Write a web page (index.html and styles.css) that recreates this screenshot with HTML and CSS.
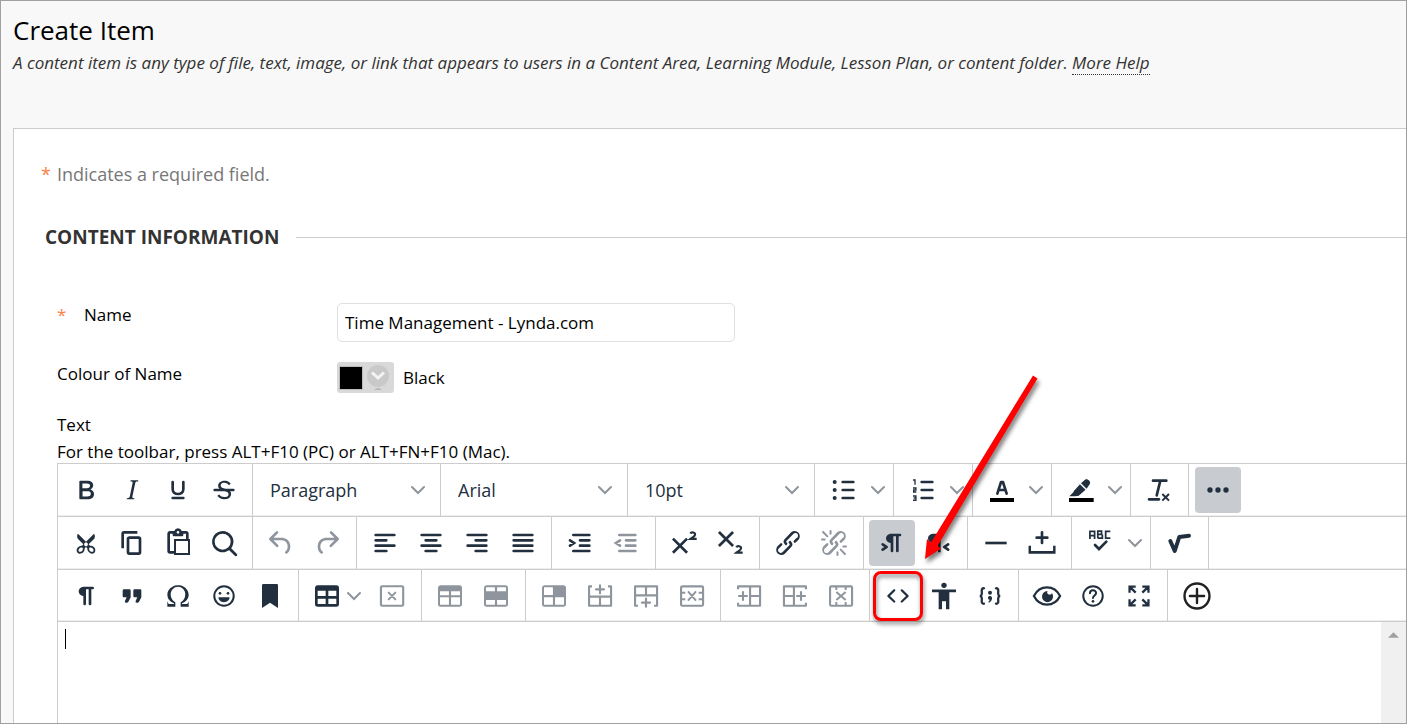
FILE: index.html
```
<!DOCTYPE html>
<html lang="en">
<head>
<meta charset="utf-8">
<title>Create Item</title>
<link rel="stylesheet" href="styles.css">
</head>
<body>
<svg class="sprite" aria-hidden="true">
  <symbol id="chev" viewBox="0 0 14 14"><path class="ln" stroke-width="2" stroke-linecap="round" d="M1 4l6 6 6-6"/></symbol>
  <symbol id="bold" viewBox="0 0 24 24"><path d="M7.8 19c-.3 0-.5 0-.6-.2l-.2-.5V5.7c0-.2 0-.4.2-.5l.6-.2h5c1.5 0 2.7.3 3.5 1 .7.6 1.1 1.4 1.1 2.5a3 3 0 0 1-.6 1.9c-.4.6-1 1-1.6 1.2.4.1.9.3 1.3.6s.8.7 1 1.2c.4.4.5 1 .5 1.6 0 1.3-.4 2.3-1.3 3-.8.7-2.1 1-3.8 1H7.8zm5-8.3c.6 0 1.2-.1 1.6-.5.4-.3.6-.7.6-1.3 0-1.1-.8-1.7-2.3-1.7H9.3v3.5h3.4zm.5 6c.7 0 1.3-.1 1.7-.4.4-.4.6-.9.6-1.5s-.2-1-.7-1.4c-.4-.3-1-.4-2-.4H9.4v3.8h4z"/></symbol>
  <symbol id="italic" viewBox="0 0 24 24"><path d="M16.7 4.7l-.1.9h-.3c-.6 0-1 0-1.4.3-.3.3-.4.6-.5 1.1l-2.1 9.8v.6c0 .5.4.8 1.4.8h.2l-.2.8H8l.2-.8h.2c1.1 0 1.8-.5 2-1.5l2-9.8.1-.5c0-.6-.4-.8-1.4-.8h-.3l.2-.9h5.8z"/></symbol>
  <symbol id="underline" viewBox="0 0 24 24"><path class="ln" stroke-width="2" stroke-linecap="round" d="M8 6v5.500c0 4.700 8 4.700 8 0V6M8 18h8"/></symbol>
  <symbol id="strike" viewBox="0 0 24 24"><path d="M15.600 8.500c-.5-.7-1-1.100-1.300-1.300-.6-.4-1.300-.6-2-.6-2.700 0-2.800 1.700-2.800 2.100 0 1.600 1.800 2 3.200 2.300 4.400.9 4.600 2.800 4.600 3.900 0 1.400-.7 4.100-5 4.100A6.200 6.200 0 0 1 7 16.400l1.500-1.100c.4.6 1.600 2 3.700 2 1.600 0 2.500-.4 3-1.200.4-.8.3-2-.8-2.600-.7-.4-1.600-.7-2.900-1-1-.2-3.900-.8-3.900-3.600C7.600 6 10.300 5 12.400 5c2.900 0 4.200 1.600 4.700 2.400l-1.500 1.100z"/><path d="M5 11h14a1 1 0 0 1 0 2H5a1 1 0 0 1 0-2z"/></symbol>
  <symbol id="bullets" viewBox="0 0 24 24"><circle cx="5" cy="6" r="1.500"/><circle cx="5" cy="12" r="1.500"/><circle cx="5" cy="18" r="1.500"/><path class="ln" stroke-width="2" stroke-linecap="round" d="M11 6h8M11 12h8M11 18h8"/></symbol>
  <symbol id="numbers" viewBox="0 0 24 24"><path class="ln" stroke-width="2" stroke-linecap="round" d="M11 6h8M11 12h8M11 18h8"/><path class="ln" stroke-width="1" d="M4.500 4.500H6V8M4.500 10.500h2.200V12H5v1.500h2M4.500 16.500h2.200v3.200H4.500M5 18h1.500"/></symbol>
  <symbol id="forecolor" viewBox="0 0 24 24"><path fill="#000" d="M3 18h18v3H3z"/><path class="ln" stroke-width="2" stroke-linejoin="round" stroke-linecap="round" d="M8.500 14.700L11.300 6h1.400l2.800 8.700M9.800 12h4.400"/></symbol>
  <symbol id="backcolor" viewBox="0 0 24 24"><path fill="#000" d="M3 18h18.500v3H3z"/><path d="M7.700 16.700H3.300l3.300-3.300-.3-.3 4.900-5.500 4.200 4.200-5.100 4.500zM12 6.900l3.200-2.700c1.400-1.100 4.700 1.400 3.300 3.400L16.200 11z"/></symbol>
  <symbol id="clear" viewBox="0 0 24 24"><path class="ln" stroke-width="2" stroke-linecap="round" d="M7.500 5h10M13 5l-2.700 11M4.500 19H12"/><path class="ln" stroke-width="1.500" d="M14.500 15l5 5M19.500 15l-5 5"/></symbol>
  <symbol id="more" viewBox="0 0 24 24"><circle cx="6" cy="12" r="2"/><circle cx="12" cy="12" r="2"/><circle cx="18" cy="12" r="2"/></symbol>
  <symbol id="cut" viewBox="0 0 24 24"><path d="M18 15c.6.7 1 1.400 1 2.300 0 .8-.2 1.500-.7 2l-.8.5-1 .2c-.4 0-.8 0-1.200-.3a3.900 3.900 0 0 1-2.100-2.200c-.2-.5-.3-1-.2-1.500l-1-1-1 1c0 .5 0 1-.2 1.500-.1.500-.4 1-.9 1.400-.3.4-.7.6-1.200.8l-1.200.3c-.4 0-.7 0-1-.2-.3 0-.6-.3-.8-.5-.5-.5-.8-1.200-.7-2 0-.9.4-1.600 1-2.200A3.700 3.700 0 0 1 8.600 14H9l1-1-4-4-.5-1a3.300 3.300 0 0 1 0-2c0-.4.3-.7.5-1l6 6 6-6 .5 1a3.300 3.300 0 0 1 0 2c0 .4-.3.7-.5 1l-4 4 1 1h.5c.4 0 .8 0 1.200.3.5.2.9.4 1.200.8zm-8.500 2.200l.1-.4v-.7a1 1 0 0 0-.2-.5 1 1 0 0 0-.4-.2 1.600 1.600 0 0 0-.8 0 2.600 2.600 0 0 0-.8.3 2.500 2.500 0 0 0-.9 1.100l-.1.4v.7l.2.5.5.2h.7a2.500 2.500 0 0 0 .8-.3 2.800 2.800 0 0 0 1-1zm2.500-2.800c.4 0 .7-.1 1-.4.3-.3.4-.6.4-1s-.1-.7-.4-1c-.3-.3-.6-.4-1-.4s-.7.1-1 .4c-.3.3-.4.6-.4 1s.1.7.4 1c.3.3.6.4 1 .4zm5.400 4l.2-.5v-.7a2.600 2.600 0 0 0-.3-.8 2.400 2.400 0 0 0-.7-.7 2.500 2.500 0 0 0-.8-.3 1.500 1.500 0 0 0-.8 0 1 1 0 0 0-.4.2 1 1 0 0 0-.2.500 1.500 1.500 0 0 0 0 .7v.4l.3.4.3.4a2.800 2.800 0 0 0 .8.5l.4.1h.7l.5-.2z"/></symbol>
  <symbol id="copy" viewBox="0 0 24 24"><path d="M16 3H6a2 2 0 0 0-2 2v11h2V5h10V3zm1 4a2 2 0 0 1 2 2v10a2 2 0 0 1-2 2h-7a2 2 0 0 1-2-2V9c0-1.200.9-2 2-2h7zm0 12V9h-7v10h7z"/></symbol>
  <symbol id="paste" viewBox="0 0 24 24"><path fill-rule="evenodd" d="M18 9V5h-2v1c0 .6-.4 1-1 1H9a1 1 0 0 1-1-1V5H6v13h3V9h9zM9 20H6a2 2 0 0 1-2-2V5c0-1.100.9-2 2-2h3.200A3 3 0 0 1 12 1a3 3 0 0 1 2.800 2H18a2 2 0 0 1 2 2v4h1v12H9v-1zm1.500-9.500v9h9v-9h-9zM12 3a1 1 0 0 0-1 1c0 .5.4 1 1 1s1-.5 1-1-.4-1-1-1z"/></symbol>
  <symbol id="search" viewBox="0 0 24 24"><path d="M16 17.300a8 8 0 1 1 1.400-1.400l4.300 4.400a1 1 0 0 1-1.400 1.400l-4.400-4.300zm-5-.3a6 6 0 1 0 0-12 6 6 0 0 0 0 12z"/></symbol>
  <symbol id="undo" viewBox="0 0 24 24"><path d="M6.400 8H12c3.700 0 6.200 2 6.800 5.100.6 2.700-.4 5.600-2.300 6.800a1 1 0 0 1-1-1.800c1.100-.6 1.800-2.700 1.400-4.600-.5-2.100-2.100-3.500-4.900-3.500H6.400l3.300 3.300a1 1 0 1 1-1.400 1.400l-5-5a1 1 0 0 1 0-1.400l5-5a1 1 0 0 1 1.400 1.400L6.400 8z"/></symbol>
  <symbol id="redo" viewBox="0 0 24 24"><path transform="matrix(-1 0 0 1 24 0)" d="M6.400 8H12c3.700 0 6.200 2 6.800 5.100.6 2.700-.4 5.600-2.300 6.800a1 1 0 0 1-1-1.800c1.100-.6 1.800-2.700 1.400-4.600-.5-2.100-2.100-3.500-4.900-3.500H6.400l3.300 3.300a1 1 0 1 1-1.400 1.400l-5-5a1 1 0 0 1 0-1.400l5-5a1 1 0 0 1 1.400 1.400L6.400 8z"/></symbol>
  <symbol id="aleft" viewBox="0 0 24 24"><path class="ln" stroke-width="2" stroke-linecap="round" d="M5 6h14M5 10h8M5 14h14M5 18h8"/></symbol>
  <symbol id="acenter" viewBox="0 0 24 24"><path class="ln" stroke-width="2" stroke-linecap="round" d="M5 6h14M8 10h8M5 14h14M8 18h8"/></symbol>
  <symbol id="aright" viewBox="0 0 24 24"><path class="ln" stroke-width="2" stroke-linecap="round" d="M5 6h14M11 10h8M5 14h14M11 18h8"/></symbol>
  <symbol id="ajust" viewBox="0 0 24 24"><path class="ln" stroke-width="2" stroke-linecap="round" d="M5 6h14M5 10h14M5 14h14M5 18h14"/></symbol>
  <symbol id="indent" viewBox="0 0 24 24"><path class="ln" stroke-width="2" stroke-linecap="round" d="M7 6h12M12 10h7M12 14h7M7 18h12M4.500 10l3 2-3 2"/></symbol>
  <symbol id="outdent" viewBox="0 0 24 24"><path class="ln" stroke-width="2" stroke-linecap="round" d="M7 6h12M12 10h7M12 14h7M7 18h12M7.500 10l-3 2 3 2"/></symbol>
  <symbol id="sup" viewBox="0 0 24 24"><path class="ln" stroke-width="2" d="M3.700 8.700l10.600 10.600M14.300 8.700L3.700 19.300"/><path class="ln" stroke-width="1.600" d="M16.700 4.900c.8-1.400 4-1 3.600.9-.2 1.400-2.200 2-3.500 3.100h4.700"/></symbol>
  <symbol id="sub" viewBox="0 0 24 24"><path class="ln" stroke-width="2" d="M3.700 3.700l10.600 10.600M14.300 3.700L3.700 14.300"/><path class="ln" stroke-width="1.600" d="M16.700 15.200c.8-1.400 4-1 3.600.9-.2 1.400-2.200 2-3.500 3.100h4.700"/></symbol>
  <symbol id="link" viewBox="0 0 24 24"><path d="M6.200 12.300a1 1 0 0 1 1.400 1.400l-2.100 2a2 2 0 1 0 2.700 2.800l4.800-4.800a1 1 0 0 0 0-1.400 1 1 0 1 1 1.400-1.300 2.900 2.900 0 0 1 0 4L9.600 20a3.900 3.900 0 0 1-5.500-5.500l2-2zm11.600-.6a1 1 0 0 1-1.400-1.400l2-2a2 2 0 1 0-2.600-2.800L11 10.300a1 1 0 0 0 0 1.400A1 1 0 1 1 9.600 13a2.900 2.900 0 0 1 0-4L14.400 4a3.900 3.900 0 0 1 5.500 5.500l-2 2z"/></symbol>
  <symbol id="unlink" viewBox="0 0 24 24"><path d="M6.200 12.300a1 1 0 0 1 1.400 1.400l-2 2a2 2 0 1 0 2.600 2.800l4.800-4.800a1 1 0 0 0 0-1.400 1 1 0 1 1 1.400-1.300 2.900 2.900 0 0 1 0 4L9.600 20a3.900 3.900 0 0 1-5.500-5.500l2-2zm11.600-.6a1 1 0 0 1-1.400-1.400l2.100-2a2 2 0 1 0-2.700-2.800L11 10.300a1 1 0 0 0 0 1.400A1 1 0 1 1 9.600 13a2.900 2.900 0 0 1 0-4L14.400 4a3.900 3.900 0 0 1 5.500 5.500l-2 2z"/><path class="ln" stroke-width="1.500" stroke-linecap="round" d="M3.800 3.800L7 7M3 9.400h2M9.400 3v2M17 17l3.200 3.200M14.600 19v2M19 14.600h2"/></symbol>
  <symbol id="ltr" viewBox="0 0 24 24"><path d="M11 5h7a1 1 0 0 1 0 2h-1v11a1 1 0 0 1-2 0V7h-2v11a1 1 0 0 1-2 0v-6c-.5 0-1 0-1.400-.3A3.400 3.400 0 0 1 7.800 10a3.300 3.300 0 0 1 0-2.800 3.400 3.400 0 0 1 1.800-1.800L11 5zM4.400 16.200L6.200 15l-1.800-1.200a1 1 0 0 1 1.200-1.600l3 2a1 1 0 0 1 0 1.600l-3 2a1 1 0 1 1-1.200-1.600z"/></symbol>
  <symbol id="rtl" viewBox="0 0 24 24"><path d="M8 5h8v2h-2v12h-2V7h-2v12H8v-7c-.5 0-1 0-1.400-.3A3.400 3.400 0 0 1 4.800 10a3.300 3.300 0 0 1 0-2.800 3.400 3.400 0 0 1 1.800-1.800L8 5zm12.200 11.200a1 1 0 1 1-1.200 1.600l-3-2a1 1 0 0 1 0-1.600l3-2a1 1 0 1 1 1.200 1.600L18.400 15l1.800 1.200z"/></symbol>
  <symbol id="hr" viewBox="0 0 24 24"><path d="M4 11h16v2H4z"/></symbol>
  <symbol id="nbsp" viewBox="0 0 24 24"><path class="ln" stroke-width="2" stroke-linecap="round" d="M12 4v8M8 8h8"/><path class="ln" stroke-width="2" d="M2 13v5h20v-5" transform="translate(1 1) scale(.92 1)"/></symbol>
  <symbol id="spell" viewBox="0 0 24 24"><path class="ln" stroke-width="1.300" d="M3.700 9V3.200h3.500V9M3.700 6.400h3.500M9.600 8.400V3.100h2.800v2.500H9.600M13 5.600v2.800H9.600M19 3.200h-3.500v5.200H19"/><path class="ln" stroke-width="2" stroke-linecap="round" d="M7.500 13.500l3 3 5.500-5.500"/></symbol>
  <symbol id="math" viewBox="0 0 24 24"><path class="ln" stroke-width="3" stroke-linecap="round" stroke-linejoin="round" d="M5.500 10.500l3.300 7.500 3.400-10.500 7.300-1"/></symbol>
  <symbol id="para" viewBox="0 0 24 24"><path d="M10 5h7a1 1 0 0 1 0 2h-1v11a1 1 0 0 1-2 0V7h-2v11a1 1 0 0 1-2 0v-6c-.5 0-1 0-1.400-.3A3.400 3.400 0 0 1 6.800 10a3.300 3.300 0 0 1 0-2.800 3.400 3.400 0 0 1 1.800-1.800L10 5z"/></symbol>
  <symbol id="quote" viewBox="0 0 24 24"><path d="M7.500 17h.9c.4 0 .7-.2.900-.6L11 13V8c0-.6-.4-1-1-1H6a1 1 0 0 0-1 1v4c0 .6.4 1 1 1h2l-1.300 2.700a1 1 0 0 0 .8 1.300zm8 0h.9c.4 0 .7-.2.900-.6L19 13V8c0-.6-.4-1-1-1h-4a1 1 0 0 0-1 1v4c0 .6.4 1 1 1h2l-1.300 2.700a1 1 0 0 0 .8 1.300z"/></symbol>
  <symbol id="omega" viewBox="0 0 24 24"><path d="M15 18h4l1-2v4h-6v-3.300l1.400-1a6 6 0 0 0 1.800-2.900 6.300 6.300 0 0 0-.1-4.100 5.800 5.800 0 0 0-3-3.200c-.6-.3-1.300-.5-2.100-.5a5.100 5.100 0 0 0-3.900 1.800 6.300 6.300 0 0 0-1.300 6 6.200 6.200 0 0 0 1.800 3l1.400.9V20H4v-4l1 2h4v-.5l-2-1L5.400 15A6.500 6.500 0 0 1 4 11c0-1 .2-1.900.6-2.700A7 7 0 0 1 7.800 5 8.200 8.200 0 0 1 12 4c1.600 0 3 .4 4.300 1 1.300.8 2.300 1.800 3 3.300A6.800 6.800 0 0 1 20 11c0 1.500-.5 2.800-1.400 4L17 16.500l-2 1v.5z"/></symbol>
  <symbol id="emoji" viewBox="0 0 24 24"><circle class="ln" stroke-width="1.500" cx="12" cy="12" r="7.300"/><circle cx="9" cy="10" r="1"/><circle cx="15" cy="10" r="1"/><path d="M7.800 13h8.400c0 4.800-8.400 4.800-8.400 0z"/></symbol>
  <symbol id="bookmark" viewBox="0 0 24 24"><path d="M6 4v17l6-4 6 4V4c0-.6-.4-1-1-1H7a1 1 0 0 0-1 1z"/></symbol>
  <symbol id="table" viewBox="0 0 24 24"><path fill-rule="evenodd" d="M19 4a2 2 0 0 1 2 2v12a2 2 0 0 1-2 2H5a2 2 0 0 1-2-2V6c0-1.100.9-2 2-2h14zM5 14v4h6v-4H5zm14 0h-6v4h6v-4zm0-6h-6v4h6V8zM5 12h6V8H5v4z"/></symbol>
  <symbol id="tdelete" viewBox="0 0 24 24"><rect class="ln" stroke-width="1.600" x="3.700" y="4.700" width="16.700" height="14.600" rx="1"/><path class="ln" stroke-width="1.500" stroke-linecap="round" d="M9.500 9.500l5 5M14.500 9.500l-5 5"/></symbol>
  <symbol id="trow" viewBox="0 0 24 24"><path fill-rule="evenodd" d="M19 4a2 2 0 0 1 2 2v12a2 2 0 0 1-2 2H5a2 2 0 0 1-2-2V6c0-1.100.9-2 2-2h14zM4.500 8.500v3h6.700v-3zm8.300 0v3h6.700v-3zM4.500 13v5.500h6.700V13zm8.300 0v5.500h6.700V13z"/></symbol>
  <symbol id="tmid" viewBox="0 0 24 24"><path fill-rule="evenodd" d="M19 4a2 2 0 0 1 2 2v12a2 2 0 0 1-2 2H5a2 2 0 0 1-2-2V6c0-1.100.9-2 2-2h14zM4.500 5.500v3h6.700v-3zm8.300 0v3h6.700v-3zM4.500 15v3.500h6.700V15zm8.300 0v3.500h6.700V15z"/></symbol>
  <symbol id="tcell" viewBox="0 0 24 24"><path fill-rule="evenodd" d="M19 4a2 2 0 0 1 2 2v12a2 2 0 0 1-2 2H5a2 2 0 0 1-2-2V6c0-1.100.9-2 2-2h14zM4.500 5.500v5.700h6.700V5.500zM4.500 13v5.500h6.700V13zm8.300 0v5.500h6.700V13z"/></symbol>
  <symbol id="rabove" viewBox="0 0 24 24"><path class="ln" stroke-width="1.600" stroke-linejoin="round" d="M6 4.800H3.800v14.500h16.500V4.800H18M3.800 12.500h16.500M12 12.500v7"/><path class="ln" stroke-width="1.600" stroke-linecap="round" d="M12 4v6M9 7h6"/></symbol>
  <symbol id="rbelow" viewBox="0 0 24 24"><path class="ln" stroke-width="1.600" stroke-linejoin="round" d="M6 19.300H3.800V4.800h16.500v14.500H18M3.800 11.500h16.500M12 4.500v7"/><path class="ln" stroke-width="1.600" stroke-linecap="round" d="M12 14v6M9 17h6"/></symbol>
  <symbol id="rdel" viewBox="0 0 24 24"><rect class="ln" stroke-width="1.600" x="3.800" y="4.800" width="16.500" height="14.500" rx="1"/><path class="ln" stroke-width="1.500" d="M4 9.500h3M4 14.500h3M17 9.500h3M17 14.500h3M9 8.500l6 7M15 8.500l-6 7"/></symbol>
  <symbol id="cleft" viewBox="0 0 24 24"><path class="ln" stroke-width="1.600" stroke-linejoin="round" d="M3.800 7V4.800h16.500v14.500H3.800V17M12.800 4.800v14.500M12.800 12h7.500"/><path class="ln" stroke-width="1.600" stroke-linecap="round" d="M4.500 12h6M7.500 9v6"/></symbol>
  <symbol id="cright" viewBox="0 0 24 24"><path class="ln" stroke-width="1.600" stroke-linejoin="round" d="M20.200 7V4.800H3.700v14.500h16.500V17M11.200 4.800v14.500M3.800 12h7.500"/><path class="ln" stroke-width="1.600" stroke-linecap="round" d="M13.500 12h6M16.500 9v6"/></symbol>
  <symbol id="cdel" viewBox="0 0 24 24"><rect class="ln" stroke-width="1.600" x="3.800" y="4.800" width="16.500" height="14.500" rx="1"/><path class="ln" stroke-width="1.500" d="M8.500 5v2.500M15.500 5v2.500M8.500 16.500V19M15.500 16.500V19M8.500 9l7 6M15.500 9l-7 6"/></symbol>
  <symbol id="code" viewBox="0 0 24 24"><path d="M9.800 15.700c.3.3.3.8 0 1-.3.4-.9.4-1.200 0l-4.400-4.100a.8.8 0 0 1 0-1.200l4.400-4.200c.3-.3.9-.3 1.200 0 .3.3.3.8 0 1.100L6 12l3.800 3.700zM14.200 15.700c-.3.3-.3.8 0 1 .4.4.9.4 1.200 0l4.400-4.100c.3-.3.3-.9 0-1.200l-4.400-4.200a.8.8 0 0 0-1.200 0c-.3.3-.3.800 0 1.100L18 12l-3.800 3.700z"/></symbol>
  <symbol id="a11y" viewBox="0 0 24 24"><circle cx="12" cy="4" r="2"/><path d="M3 7.200h18v2h-5V22h-2.500v-6h-3v6H8V9.200H3z"/></symbol>
  <symbol id="sample" viewBox="0 0 24 24"><path class="ln" stroke-width="1.700" stroke-linecap="round" d="M7.500 6.200C4.500 6 6.500 9.500 5.700 11c-.2.600-.7 1-1.400 1 .7 0 1.200.4 1.400 1 .8 1.500-1.200 5 1.800 4.800M16.500 6.200c3-.2 1 3.300 1.800 4.800.2.600.7 1 1.400 1-.7 0-1.200.4-1.400 1-.8 1.500 1.200 5-1.800 4.800"/><circle cx="12" cy="9.500" r="1.500"/><path d="M10.500 13.500c0-1 .6-1.500 1.500-1.500 1.200 0 1.600 1 1.500 2-.2 1.500-1.300 2.700-2.500 3v-1.200c.6-.2.800-.5.9-.9-.9 0-1.400-.6-1.400-1.400z"/></symbol>
  <symbol id="eye" viewBox="0 0 24 24"><path class="ln" stroke-width="1.700" d="M2.200 12C6.500 3.400 17.500 3.400 21.800 12 17.500 20.600 6.500 20.600 2.200 12z"/><path d="M12.500 8.200c-1 1.200.3 3.200 2.100 2.700.7-.2.9-.6 1.100-1.100A4.200 4.200 0 1 1 12.500 8.200z"/></symbol>
  <symbol id="help" viewBox="0 0 24 24"><circle class="ln" stroke-width="1.500" cx="12" cy="12" r="7.300"/><path class="ln" stroke-width="1.500" stroke-linecap="round" d="M9.700 10c0-3 4.600-3 4.600-.2 0 1.800-2.300 1.900-2.300 3.700"/><circle cx="12" cy="16" r="1"/></symbol>
  <symbol id="full" viewBox="0 0 24 24"><path class="ln" stroke-width="1.700" d="M4.900 9.500V4.900h4.600M5.500 5.500L9.500 9.500M14.500 4.900h4.600v4.600M18.500 5.500L14.500 9.500M4.900 14.500v4.600h4.600M5.500 18.500L9.500 14.500M14.500 19.100h4.600v-4.600M18.500 18.500L14.500 14.500"/></symbol>
  <symbol id="plus" viewBox="0 0 24 24"><circle class="ln" stroke-width="1.700" cx="12" cy="12" r="8.800"/><path class="ln" stroke-width="1.700" stroke-linecap="round" d="M7 12h10M12 7v10"/></symbol>
</svg>

<div class="page">
  <header class="head">
    <h1>Create Item</h1>
    <p>A content item is any type of file, text, image, or link that appears to users in a Content Area, Learning Module, Lesson Plan, or content folder. <a href="#">More Help</a></p>
  </header>
  <main class="card">
    <p class="required"><span class="star">*</span>Indicates a required field.</p>
    <h2>Content Information</h2>
    <form class="form">
      <div class="field name-field">
        <label for="name"><span class="star">*</span>Name</label>
        <input id="name" type="text" value="Time Management - Lynda.com">
      </div>
      <div class="field colour-field">
        <label for="colour">Colour of Name</label>
        <button id="colour" class="colour" type="button" aria-label="Pick colour"><span class="swatch"></span><svg class="drop" viewBox="0 0 22 26"><circle cx="11" cy="11" r="11" fill="#c9c9c9"/><path d="M5 7.500l6 5.500 6-5.500" fill="none" stroke="#f4f4f4" stroke-width="3"/><path d="M7 24.500q4-2 8 0z" fill="#999"/></svg></button>
        <span>Black</span>
      </div>
      <label class="text-label" for="body">Text</label>
      <p class="hint">For the toolbar, press ALT+F10 (PC) or ALT+FN+F10 (Mac).</p>
      <div class="editor">
        <div class="bar" role="toolbar">
          <div class="group g4">
            <button type="button" aria-label="Bold"><svg><use href="#bold"/></svg></button>
            <button type="button" aria-label="Italic"><svg><use href="#italic"/></svg></button>
            <button type="button" aria-label="Underline"><svg><use href="#underline"/></svg></button>
            <button type="button" aria-label="Strikethrough"><svg><use href="#strike"/></svg></button>
          </div>
          <div class="group pick block-pick"><select aria-label="Block format"><option>Paragraph</option></select><svg class="chev"><use href="#chev"/></svg></div>
          <div class="group pick"><select aria-label="Font"><option>Arial</option></select><svg class="chev"><use href="#chev"/></svg></div>
          <div class="group pick"><select aria-label="Font size"><option>10pt</option></select><svg class="chev"><use href="#chev"/></svg></div>
          <div class="group split">
            <button type="button" aria-label="Bullet list"><svg><use href="#bullets"/></svg></button>
            <button type="button" class="arrow" aria-label="Bullet styles"><svg class="chev"><use href="#chev"/></svg></button>
          </div>
          <div class="group split">
            <button type="button" aria-label="Numbered list"><svg><use href="#numbers"/></svg></button>
            <button type="button" class="arrow" aria-label="Number styles"><svg class="chev"><use href="#chev"/></svg></button>
          </div>
          <div class="group split">
            <button type="button" aria-label="Text colour"><svg><use href="#forecolor"/></svg></button>
            <button type="button" class="arrow" aria-label="Text colours"><svg class="chev"><use href="#chev"/></svg></button>
          </div>
          <div class="group split">
            <button type="button" aria-label="Highlight"><svg><use href="#backcolor"/></svg></button>
            <button type="button" class="arrow" aria-label="Highlight colours"><svg class="chev"><use href="#chev"/></svg></button>
          </div>
          <div class="group g1"><button type="button" aria-label="Clear formatting"><svg><use href="#clear"/></svg></button></div>
          <div class="group last"><button type="button" class="on" aria-label="More"><svg><use href="#more"/></svg></button></div>
        </div>
        <div class="bar" role="toolbar">
          <div class="group g4">
            <button type="button" aria-label="Cut"><svg><use href="#cut"/></svg></button>
            <button type="button" aria-label="Copy"><svg><use href="#copy"/></svg></button>
            <button type="button" aria-label="Paste"><svg><use href="#paste"/></svg></button>
            <button type="button" aria-label="Find"><svg><use href="#search"/></svg></button>
          </div>
          <div class="group g2">
            <button type="button" disabled aria-label="Undo"><svg><use href="#undo"/></svg></button>
            <button type="button" disabled aria-label="Redo"><svg><use href="#redo"/></svg></button>
          </div>
          <div class="group g4">
            <button type="button" aria-label="Align left"><svg><use href="#aleft"/></svg></button>
            <button type="button" aria-label="Align centre"><svg><use href="#acenter"/></svg></button>
            <button type="button" aria-label="Align right"><svg><use href="#aright"/></svg></button>
            <button type="button" aria-label="Justify"><svg><use href="#ajust"/></svg></button>
          </div>
          <div class="group g2">
            <button type="button" aria-label="Indent"><svg><use href="#indent"/></svg></button>
            <button type="button" disabled aria-label="Outdent"><svg><use href="#outdent"/></svg></button>
          </div>
          <div class="group g2">
            <button type="button" aria-label="Superscript"><svg><use href="#sup"/></svg></button>
            <button type="button" aria-label="Subscript"><svg><use href="#sub"/></svg></button>
          </div>
          <div class="group g2">
            <button type="button" aria-label="Link"><svg><use href="#link"/></svg></button>
            <button type="button" disabled aria-label="Remove link"><svg><use href="#unlink"/></svg></button>
          </div>
          <div class="group g2">
            <button type="button" class="on" aria-label="Left to right"><svg><use href="#ltr"/></svg></button>
            <button type="button" aria-label="Right to left"><svg><use href="#rtl"/></svg></button>
          </div>
          <div class="group g2">
            <button type="button" aria-label="Horizontal line"><svg><use href="#hr"/></svg></button>
            <button type="button" aria-label="Nonbreaking space"><svg><use href="#nbsp"/></svg></button>
          </div>
          <div class="group split">
            <button type="button" aria-label="Spell check"><svg><use href="#spell"/></svg></button>
            <button type="button" class="arrow" aria-label="Spell check language"><svg class="chev"><use href="#chev"/></svg></button>
          </div>
          <div class="group g1"><button type="button" aria-label="Math editor"><svg><use href="#math"/></svg></button></div>
        </div>
        <div class="bar bar-end" role="toolbar">
          <div class="group g5">
            <button type="button" aria-label="Show blocks"><svg><use href="#para"/></svg></button>
            <button type="button" aria-label="Quote"><svg><use href="#quote"/></svg></button>
            <button type="button" aria-label="Special character"><svg><use href="#omega"/></svg></button>
            <button type="button" aria-label="Emoji"><svg><use href="#emoji"/></svg></button>
            <button type="button" aria-label="Anchor"><svg><use href="#bookmark"/></svg></button>
          </div>
          <div class="group gt">
            <button type="button" class="menu" aria-label="Table"><svg><use href="#table"/></svg><svg class="chev"><use href="#chev"/></svg></button>
            <button type="button" disabled aria-label="Delete table"><svg><use href="#tdelete"/></svg></button>
          </div>
          <div class="group g2">
            <button type="button" disabled aria-label="Row properties"><svg><use href="#trow"/></svg></button>
            <button type="button" disabled aria-label="Merge cells"><svg><use href="#tmid"/></svg></button>
          </div>
          <div class="group g4">
            <button type="button" disabled aria-label="Cell properties"><svg><use href="#tcell"/></svg></button>
            <button type="button" disabled aria-label="Insert row above"><svg><use href="#rabove"/></svg></button>
            <button type="button" disabled aria-label="Insert row below"><svg><use href="#rbelow"/></svg></button>
            <button type="button" disabled aria-label="Delete row"><svg><use href="#rdel"/></svg></button>
          </div>
          <div class="group g3">
            <button type="button" disabled aria-label="Insert column before"><svg><use href="#cleft"/></svg></button>
            <button type="button" disabled aria-label="Insert column after"><svg><use href="#cright"/></svg></button>
            <button type="button" disabled aria-label="Delete column"><svg><use href="#cdel"/></svg></button>
          </div>
          <div class="group g3">
            <div class="callout">
              <button type="button" aria-label="Source code"><svg><use href="#code"/></svg></button>
              <svg class="pointer" viewBox="0 0 130 210" aria-hidden="true"><path fill="#f00" d="M118 9.500l4.500 3L22.500 180l3.500 2.500L10 193l2-20 4 3.500z"/></svg>
            </div>
            <button type="button" aria-label="Accessibility"><svg><use href="#a11y"/></svg></button>
            <button type="button" aria-label="Code sample"><svg><use href="#sample"/></svg></button>
          </div>
          <div class="group g3">
            <button type="button" aria-label="Preview"><svg><use href="#eye"/></svg></button>
            <button type="button" aria-label="Help"><svg><use href="#help"/></svg></button>
            <button type="button" aria-label="Fullscreen"><svg><use href="#full"/></svg></button>
          </div>
          <div class="group last"><button type="button" class="add" aria-label="Add content"><svg><use href="#plus"/></svg></button></div>
        </div>
        <div class="area">
          <textarea id="body"></textarea>
          <span class="caret"></span>
          <div class="scroll"><svg viewBox="0 0 12 6"><path d="M6 0l6 6H0z"/></svg></div>
        </div>
      </div>
    </form>
  </main>
</div>
</body>
</html>
```

FILE: styles.css
```
* { box-sizing: border-box; }
body { margin: 0; background: #f8f8f8; font-family: "Open Sans", sans-serif; font-size: 17px; line-height: 24px; color: #000; }
h1, h2, p { margin: 0; font-weight: 400; }
.sprite { position: absolute; width: 0; height: 0; }
.ln { fill: none; stroke: currentColor; }

.page { display: flex; flex-direction: column; height: 100vh; overflow: hidden; border: 1px solid #a0a0a0; }
.head { padding: 11px 12px 52px; }
.head h1 { margin-bottom: 1px; font-size: 26px; line-height: 36px; }
.head p { color: #333; font-style: italic; line-height: 27px; white-space: nowrap; }
.head a { color: inherit; text-decoration: none; border-bottom: 1px dotted #333; }

.card { flex: 1; display: flex; flex-direction: column; min-height: 0; margin-left: 12px; padding-top: 32px; background: #fff; border: 1px solid #ccc; border-width: 1px 0 0 1px; }
.star { color: #ff8042; }
.required { display: flex; gap: 6px; padding-left: 27px; color: #777; font-size: 18px; line-height: 26px; }
h2 { display: flex; align-items: center; gap: 17px; margin: 36px 0 0 31px; color: #333; font-size: 19px; line-height: 28px; font-weight: 700; text-transform: uppercase; }
h2::after { content: ""; flex: 1; height: 1px; background: #ccc; }

.form { flex: 1; display: flex; flex-direction: column; min-height: 0; margin-left: 43px; padding-top: 52px; }
.field { display: flex; align-items: flex-start; }
.field > label { width: 280px; }
.name-field .star { display: inline-block; width: 27px; }
.name-field input { width: 398px; height: 39px; padding: 0 7px; border: 1px solid #e0e0e0; border-radius: 5px; font: inherit; color: inherit; }
.colour-field { margin-top: 20px; align-items: center; }
.colour-field label { align-self: flex-start; }
.colour { display: flex; align-items: center; gap: 4px; width: 57px; height: 31px; margin-right: 9px; padding: 0 2px; border: 0; border-radius: 3px; background: #d9d9d9; }
.swatch { width: 24px; height: 24px; background: #000; border: 1px solid #bbb; }
.drop { width: 22px; height: 26px; }
.text-label { margin-top: 20px; }
.hint { line-height: 24px; margin: 3px 0 -1px; }

.editor { flex: 1; display: flex; flex-direction: column; min-height: 0; border-left: 1px solid #ccc; color: #222f3e; }
.bar { display: flex; flex: none; height: 53px; border-top: 1px solid #ccc; box-shadow: inset 0 -1px #eee; }
.bar-end { height: 52px; }
.group { display: flex; align-items: center; flex: none; padding-left: 5px; border-right: 1px solid #ccc; }
.g1 { width: 58px; }
.g2 { width: 104px; }
.g3 { width: 149px; }
.g4 { width: 195px; }
.g5 { width: 241px; }
.gt { width: 123px; }
.split { width: 79px; padding-left: 6px; }
.pick { width: 187px; position: relative; }
.block-pick { width: 188px; }
.last { padding-left: 6px; border-right: 0; }
.bar button { display: flex; align-items: center; justify-content: center; flex: none; width: 46px; height: 46px; padding: 0; border: 0; border-radius: 4px; background: none; color: #222f3e; }
.bar button svg { width: 32px; height: 32px; fill: currentColor; }
.bar button:disabled { color: #8f959d; }
.bar button.on { background: #c8cbcf; }
.bar button.arrow { width: 21px; }
.bar button.menu { width: 65px; justify-content: flex-start; gap: 4px; padding-left: 7px; }
.bar svg.chev, .bar button svg.chev { width: 14px; height: 14px; color: #8f959d; fill: none; }
.bar button.add { color: #222; }
.bar button.add svg { width: 34px; height: 34px; }
.pick select { width: 100%; height: 46px; padding: 0 12px; border: 0; background: none; appearance: none; font: inherit; font-size: 18px; color: inherit; }
.pick .chev { position: absolute; right: 15px; pointer-events: none; }

.callout { position: relative; z-index: 2; }
.callout::after { content: ""; position: absolute; inset: -2px; border: 3px solid #f00; border-radius: 8px; filter: drop-shadow(1px 3px 2px rgba(0, 0, 0, .5)); pointer-events: none; }
.pointer { position: absolute; left: 40px; top: -207px; width: 130px; height: 210px; pointer-events: none; filter: drop-shadow(2px 4px 2px rgba(0, 0, 0, .5)); }

.area { position: relative; flex: 1; display: flex; min-height: 0; border-top: 1px solid #ccc; }
.area textarea { flex: 1; padding: 8px; border: 0; outline: 0; resize: none; font: inherit; }
.caret { position: absolute; left: 7px; top: 7px; width: 1px; height: 20px; background: #000; }
.scroll { width: 25px; padding: 10px 7px; background: #f0f0f0; }
.scroll svg { display: block; width: 11px; height: 6px; fill: #a0a0a0; }
```
